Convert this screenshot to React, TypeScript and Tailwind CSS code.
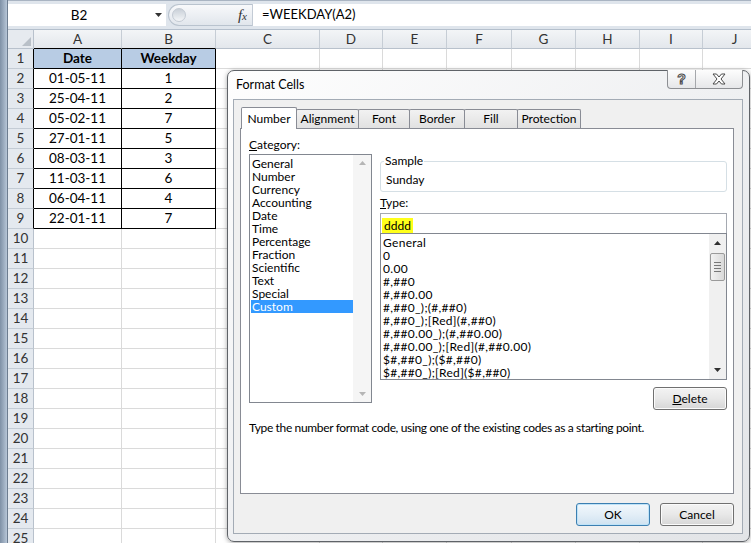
import React from "react";

const colW = ["w-[88px]", "w-[94px]", "w-[104px]", "w-[63px]", "w-[64px]", "w-[65px]", "w-[64px]", "w-[64px]", "w-[63px]", "w-[64px]"];
const colNames = ["A", "B", "C", "D", "E", "F", "G", "H", "I", "J"];

const data = [
  ["Date", "Weekday"],
  ["01-05-11", "1"],
  ["25-04-11", "2"],
  ["05-02-11", "7"],
  ["27-01-11", "5"],
  ["08-03-11", "3"],
  ["11-03-11", "6"],
  ["06-04-11", "4"],
  ["22-01-11", "7"],
];

const categories = ["General", "Number", "Currency", "Accounting", "Date", "Time", "Percentage", "Fraction", "Scientific", "Text", "Special", "Custom"];

const formats = [
  "General",
  "0",
  "0.00",
  "#,##0",
  "#,##0.00",
  "#,##0_);(#,##0)",
  "#,##0_);[Red](#,##0)",
  "#,##0.00_);(#,##0.00)",
  "#,##0.00_);[Red](#,##0.00)",
  "$#,##0_);($#,##0)",
  "$#,##0_);[Red]($#,##0)",
];

const tabs = [
  { label: "Number", w: "w-[56px]" },
  { label: "Alignment", w: "w-[63px]" },
  { label: "Font", w: "w-[52px]" },
  { label: "Border", w: "w-[56px]" },
  { label: "Fill", w: "w-[54px]" },
  { label: "Protection", w: "w-[64px]" },
];

const Arrow = ({ up, color }: { up?: boolean; color: string }) => (
  <svg width="7" height="4" viewBox="0 0 7 4">
    <polygon points={up ? "0,4 3.5,0 7,4" : "0,0 3.5,4 7,0"} fill={color} />
  </svg>
);

const Sheet = () => (
  <div className="flex flex-col w-[743px] overflow-hidden font-['Lato',sans-serif] text-[13.5px] text-[#333]">
    {/* formula bar */}
    <div className="h-[30px] shrink-0 bg-[#dfe5ec] border-t border-[#a9b4c2] pt-[3px] pb-[4px] flex border-b border-b-[#b4bfcc]">
      <div className="w-[158px] h-[22px] bg-white flex items-center">
        <div className="flex-1 text-center text-black">B2</div>
        <div className="w-[16px] flex justify-center">
          <Arrow color="#333" />
        </div>
      </div>
      <div className="ml-[2px] w-[84px] h-[22px] rounded-l-[11px] border border-r-0 border-[#b9c3ce] bg-linear-to-b from-[#f8f9fb] to-[#e1e6ec] flex items-center">
        <div className="ml-[3px] w-[14px] h-[14px] rounded-full bg-linear-to-b from-[#c9d0d8] to-[#f4f6f8] border border-[#c3cad3]" />
        <div className="ml-auto mr-[5px] font-['Liberation_Serif',serif] italic text-[15px] text-[#333] leading-none">
          f<span className="text-[11px]">x</span>
        </div>
      </div>
      <div className="flex-1 h-[22px] bg-white border-l border-[#c3cbd5] flex items-center pl-[9px] text-black text-[13px]">=WEEKDAY(A2)</div>
    </div>
    {/* column headers */}
    <div className="flex h-[19px] shrink-0">
      <div className="w-[26px] shrink-0 bg-[#e6eaef] border-r border-b border-[#b8c1cc] flex items-end justify-end p-[2px]">
        <svg width="9" height="9" viewBox="0 0 9 9">
          <polygon points="9,0 9,9 0,9" fill="#b9c0c8" />
        </svg>
      </div>
      {colNames.map((c, i) => (
        <div
          key={c}
          className={`${colW[i]} shrink-0 bg-linear-to-b from-[#f3f5f7] to-[#e3e7ec] border-r border-[#c6cdd5] border-b ${i < 2 ? "border-b-black" : "border-b-[#b8c1cc]"} flex items-center justify-center`}
        >
          {c}
        </div>
      ))}
    </div>
    {Array.from({ length: 25 }, (_, r) => {
      const n = r + 1;
      const inTable = n <= 9;
      return (
        <div key={n} className="flex h-[20px] shrink-0">
          <div
            className={`w-[26px] shrink-0 bg-[#e4e9ef] border-b border-b-[#c4ccd5] border-r ${inTable ? "border-r-black" : "border-r-[#b8c1cc]"} flex items-center justify-center`}
          >
            {n}
          </div>
          {colW.map((w, c) => {
            const t = inTable && c < 2;
            const head = n === 1 && c < 2;
            return (
              <div
                key={c}
                className={`${w} shrink-0 border-r border-b ${t ? "border-black" : "border-[#dadada]"} ${head ? "bg-[#b8cce4] font-bold" : "bg-white"} flex items-center justify-center text-black`}
              >
                {t ? data[r][c] : ""}
              </div>
            );
          })}
        </div>
      );
    })}
  </div>
);

const Button = ({ children, primary, w }: { children: React.ReactNode; primary?: boolean; w: string }) => (
  <div
    className={`${w} h-[23px] rounded-[3px] border flex items-center justify-center ${
      primary
        ? "border-[#3c7fb1] bg-linear-to-b from-[#f2f8fc] via-[#e3eef7] to-[#cfe2f0] shadow-[inset_0_0_0_1px_#bfe3f8]"
        : "border-[#707070] bg-linear-to-b from-[#f3f3f3] via-[#e8e8e8] to-[#d6d6d6] shadow-[inset_0_0_0_1px_#fbfbfb]"
    }`}
  >
    {children}
  </div>
);

const Dialog = () => (
  <div className="absolute left-[227px] top-[70px] w-[523px] h-[472px] rounded-[7px] border border-[#5f6368] bg-linear-to-br from-[#fefefe] via-[#eff0f2] to-[#e2e4e7] shadow-[0_1px_5px_rgba(0,0,0,0.35)] pl-[5px] pr-[6px] pb-[7px] flex flex-col font-['Lato',sans-serif] text-[12px] text-black">
    <div className="h-[28px] shrink-0 flex items-center pl-[3px] text-[12.5px]">Format Cells</div>
    {/* caption buttons */}
    <div className="absolute right-[6px] top-[-1px] flex h-[19px] rounded-b-[4px] border border-t-0 border-[#8d8f93] bg-linear-to-b from-[#fdfdfd] to-[#e6e7e9] overflow-hidden">
      <div className="w-[28px] flex items-center justify-center border-r border-[#a5a7ab]">
        <span className="text-[14px] font-bold leading-none text-white [-webkit-text-stroke:1px_#4a4a4a] font-['Liberation_Sans',sans-serif]">?</span>
      </div>
      <div className="w-[46px] flex items-center justify-center">
        <svg width="14" height="12" viewBox="0 0 14 12">
          <polygon
            points="1,1 4.5,1 7,4 9.5,1 13,1 9,6 13,11 9.5,11 7,8 4.5,11 1,11 5,6"
            fill="#ffffff"
            stroke="#4a4a4a"
            strokeWidth="1"
            strokeLinejoin="round"
          />
        </svg>
      </div>
    </div>
    {/* client */}
    <div className="flex-1 bg-[#f0f0f0] border border-[#a3abb5] pt-[7px] pl-[6px] pr-[8px] pb-[7px] flex flex-col">
      <div className="flex items-end h-[21px] pl-[1px]">
        {tabs.map((t, i) =>
          i === 0 ? (
            <div key={t.label} className={`${t.w} h-[22px] mb-[-1px] relative z-10 bg-white border border-b-0 border-[#898c95] rounded-t-[2px] flex items-center justify-center`}>
              {t.label}
            </div>
          ) : (
            <div key={t.label} className={`${t.w} h-[19px] -ml-px bg-linear-to-b from-[#f2f2f2] to-[#e1e1e1] border border-b-0 border-[#898c95] rounded-t-[2px] flex items-center justify-center`}>
              {t.label}
            </div>
          )
        )}
      </div>
      <div className="h-[366px] bg-white border border-[#898c95] pt-[9px] pl-[8px] pr-[6px] flex flex-col">
        <div className="flex">
          {/* category column */}
          <div className="w-[123px] flex flex-col">
            <div className="h-[14px] leading-[14px]">
              <span className="underline">C</span>ategory:
            </div>
            <div className="mt-[2px] h-[249px] border border-[#828790] flex">
              <div className="flex-1 pt-[2px] pl-[1px] flex flex-col">
                {categories.map((c) => (
                  <div key={c} className={`h-[13px] leading-[13px] pl-[1px] ${c === "Custom" ? "bg-[#3399ff] text-white" : ""}`}>
                    {c}
                  </div>
                ))}
              </div>
              <div className="w-[18px] bg-[#f5f5f5] flex flex-col items-center justify-between py-[6px]">
                <Arrow up color="#b5b5b5" />
                <Arrow color="#b5b5b5" />
              </div>
            </div>
          </div>
          {/* right column */}
          <div className="ml-[8px] flex-1 flex flex-col">
            <div className="mt-[23px] h-[31px] relative border border-[#d5dfe5] rounded-[3px] pt-[11px] pl-[5px]">
              <span className="absolute top-[-8px] left-[3px] bg-white px-[1px] leading-[14px]">Sample</span>
              <div className="leading-[14px]">Sunday</div>
            </div>
            <div className="mt-[4px] h-[14px] leading-[14px]">
              <span className="underline">T</span>ype:
            </div>
            <div className="mt-[3px] h-[21px] border border-[#a5a9b1] pl-[1px] pt-[3px]">
              <span className="inline-block h-[15px] leading-[15px] px-[2px] bg-[#ffff1a]">dddd</span>
            </div>
            <div className="-mt-px h-[147px] border border-[#828790] flex">
              <div className="flex-1 pt-[2px] pl-[2px] flex flex-col tracking-[0.3px]">
                {formats.map((f) => (
                  <div key={f} className="h-[13px] leading-[13px] whitespace-nowrap">
                    {f}
                  </div>
                ))}
              </div>
              <div className="w-[17px] bg-[#f0f0f0] flex flex-col items-center">
                <div className="h-[18px] flex items-center justify-center">
                  <Arrow up color="#303030" />
                </div>
                <div className="mt-[1px] w-[15px] h-[28px] rounded-[2px] border border-[#9a9a9a] bg-linear-to-r from-[#f2f2f2] to-[#d9d9d9] flex flex-col items-center justify-center gap-[2px]">
                  <div className="w-[7px] h-px bg-[#777]" />
                  <div className="w-[7px] h-px bg-[#777]" />
                  <div className="w-[7px] h-px bg-[#777]" />
                  <div className="w-[7px] h-px bg-[#777]" />
                </div>
                <div className="mt-auto h-[18px] flex items-center justify-center">
                  <Arrow color="#303030" />
                </div>
              </div>
            </div>
            <div className="mt-[7px] self-end">
              <Button w="w-[74px]">
                <span className="underline">D</span>elete
              </Button>
            </div>
          </div>
        </div>
        <div className="mt-[11px] leading-[14px] tracking-[-0.35px]">Type the number format code, using one of the existing codes as a starting point.</div>
      </div>
      <div className="mt-[9px] flex justify-end gap-[10px]">
        <Button primary w="w-[74px]">
          OK
        </Button>
        <Button w="w-[74px]">Cancel</Button>
      </div>
    </div>
  </div>
);

export default function App() {
  return (
    <div className="relative w-[751px] h-[543px] overflow-hidden bg-white flex">
      <div className="w-[8px] shrink-0 bg-linear-to-r from-[#7f91a6] to-[#b7c6d7] border-r border-[#6d7d90]" />
      <Sheet />
      <Dialog />
    </div>
  );
}
